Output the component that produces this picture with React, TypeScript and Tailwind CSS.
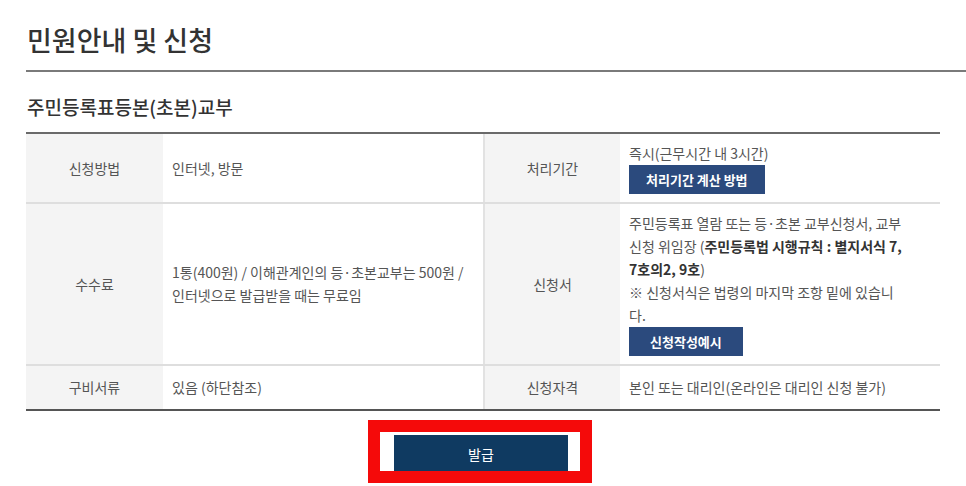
// types
import type { ReactNode } from "react";

const Th = ({ children, divider }: { children: ReactNode; divider?: boolean }) => (
  <div
    className={`flex items-center justify-center bg-[#f4f4f4] text-[14px] text-[#555] ${
      divider ? "border-l-2 border-[#e2e2e2]" : ""
    }`}
  >
    {children}
  </div>
);

const Td = ({ children }: { children: ReactNode }) => (
  <div className="flex flex-col justify-center px-[9px] py-[8px] text-[14px] leading-[23px] whitespace-nowrap text-[#555]">
    {children}
  </div>
);

const SmallButton = ({ name, wide }: { name: string; wide?: boolean }) => (
  <button
    className={`h-[29px] self-start bg-[#2b4a7d] text-[13px] font-bold text-white ${
      wide ? "px-[21px]" : "px-[17px]"
    }`}
  >
    {name}
  </button>
);

const App = () => {
  return (
    <main className="min-h-[486px] bg-white pt-[24px] pl-[26px] font-['Noto_Sans_CJK_KR','Noto_Sans',sans-serif]">
      {/* Page header */}
      <h2 className="border-b-2 border-[#7a7a7a] pb-[14px] pl-[1px] text-[27px] leading-[32px] font-medium text-[#333]">
        민원안내 및 신청
      </h2>
      <h3 className="mt-[23px] pl-[1px] text-[19px] leading-[24px] font-medium text-[#333]">
        주민등록표등본(초본)교부
      </h3>

      {/* Info table */}
      <div className="mt-[13px] grid w-[914px] grid-cols-[137px_320px_137px_320px] border-t-2 border-b-2 border-t-[#6a6a6a] border-b-[#555]">
        {/* Row 1 */}
        <Th>신청방법</Th>
        <Td>인터넷, 방문</Td>
        <Th divider>처리기간</Th>
        <Td>
          <span>즉시(근무시간 내 3시간)</span>
          <SmallButton name="처리기간 계산 방법" />
        </Td>
        <div className="col-span-4 h-[2px] bg-[#dedede]" />

        {/* Row 2 */}
        <Th>수수료</Th>
        <Td>
          <span>1통(400원) / 이해관계인의 등·초본교부는 500원 /</span>
          <span>인터넷으로 발급받을 때는 무료임</span>
        </Td>
        <Th divider>신청서</Th>
        <Td>
          <p>
            주민등록표 열람 또는 등·초본 교부신청서, 교부
            <br />
            신청 위임장 (<b className="font-bold text-[#333]">주민등록법 시행규칙 : 별지서식 7,</b>
            <br />
            <b className="font-bold text-[#333]">7호의2, 9호</b>)
          </p>
          <p>
            ※ 신청서식은 법령의 마지막 조항 밑에 있습니
            <br />
            다.
          </p>
          <SmallButton name="신청작성예시" wide />
        </Td>
        <div className="col-span-4 h-[2px] bg-[#dedede]" />

        {/* Row 3 */}
        <Th>구비서류</Th>
        <Td>
          <span className="py-[2px]">있음 (하단참조)</span>
        </Td>
        <Th divider>신청자격</Th>
        <Td>
          <span className="py-[2px]">본인 또는 대리인(온라인은 대리인 신청 불가)</span>
        </Td>
      </div>

      {/* Submit */}
      <div className="mt-[24px] flex w-[914px] justify-center pr-[4px]">
        <div className="relative">
          <button className="h-[38px] w-[174px] bg-[#0f3a61] text-[14px] text-white">발급</button>
          {/* highlight frame */}
          <div className="pointer-events-none absolute -top-[15px] -right-[24px] -bottom-[10px] -left-[26px] border-[12px] border-[#f50a0a]" />
        </div>
      </div>
    </main>
  );
};

export default App;
